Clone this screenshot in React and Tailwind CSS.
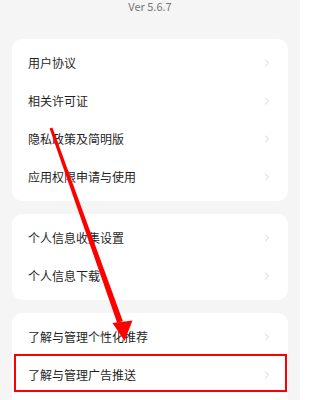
import { ChevronRight } from "lucide-react";

const groups = [
  ["用户协议", "相关许可证", "隐私政策及简明版", "应用权限申请与使用"],
  ["个人信息收集设置", "个人信息下载"],
  ["了解与管理个性化推荐", "了解与管理广告推送"],
];

const Row = ({ label }) => (
  <div className="flex h-[38px] items-center justify-between pl-4 pr-[15px]">
    <span className="text-[12px] text-[#1f1f1f]">{label}</span>
    <ChevronRight className="h-[12px] w-[12px] text-[#c4c4c4]" strokeWidth={1.5} />
  </div>
);

export default function App() {
  return (
    <div
      className="relative h-[400px] w-[300px] overflow-hidden bg-[#f5f5f5]"
      style={{ fontFamily: '"Noto Sans CJK SC", "Noto Sans", sans-serif' }}
    >
      {/* version */}
      <div className="text-center text-[11px] leading-[13px] text-[#777777]">
        Ver 5.6.7
      </div>

      <div className="mt-[26px] flex flex-col gap-[13px] px-3">
        {groups.map((items, i) => (
          <div
            key={i}
            className={
              i === groups.length - 1
                ? "rounded-[10px] bg-white pb-[40px] pt-[5px]"
                : "rounded-[10px] bg-white py-[5px]"
            }
          >
            {items.map((label) => (
              <Row key={label} label={label} />
            ))}
          </div>
        ))}
      </div>

      {/* annotation: red box */}
      <div className="pointer-events-none absolute left-[14px] top-[354px] h-[38px] w-[273px] border-[2.5px] border-[#ff0000]" />

      {/* annotation: arrow */}
      <svg
        className="pointer-events-none absolute left-0 top-0"
        width="300"
        height="400"
        viewBox="0 0 300 400"
      >
        <polygon
          points="49.6,128.6 52.4,127.4 122.8,321 117.2,323"
          fill="#ff0000"
        />
        <polygon points="112.5,323 132.5,320.5 124.5,341" fill="#ff0000" />
      </svg>
    </div>
  );
}
